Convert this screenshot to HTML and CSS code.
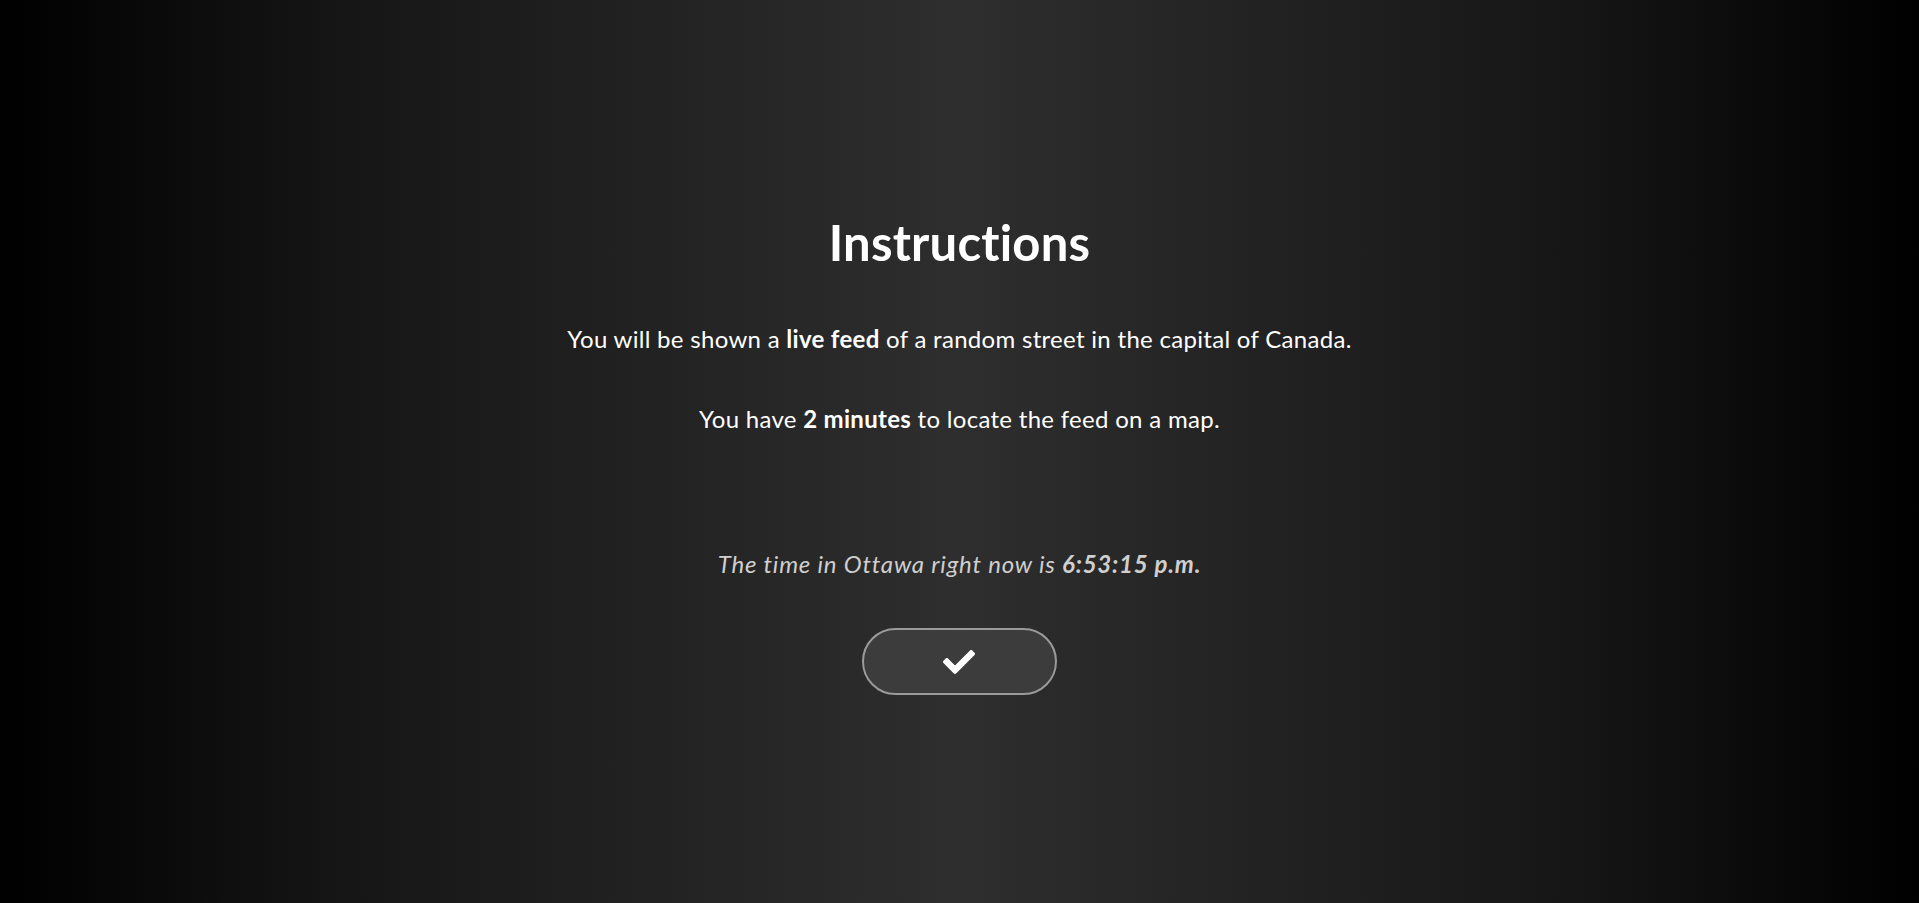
FILE: index.html
```html
<!DOCTYPE html>
<html lang="en">
<head>
<meta charset="utf-8">
<title>Instructions</title>
<link rel="stylesheet" href="styles.css">
</head>
<body>
<main class="page">
  <section class="instructions">
    <h1 class="title">Instructions</h1>
    <p class="line">You will be shown a <strong>live feed</strong> of a random street in the capital of Canada.</p>
    <p class="line">You have <strong>2 minutes</strong> to locate the feed on a map.</p>
    <p class="time">The time in Ottawa right now is <strong>6:53:15 p.m.</strong></p>
    <button class="go" type="button" aria-label="Start">
      <svg class="check" viewBox="0 0 512 512" width="32" height="32" aria-hidden="true"><path fill="#fff" d="M173.898 439.404l-166.4-166.4c-9.997-9.997-9.997-26.206 0-36.204l36.203-36.204c9.997-9.998 26.207-9.998 36.204 0L192 312.69 432.095 72.596c9.997-9.997 26.207-9.997 36.204 0l36.203 36.204c9.997 9.997 9.997 26.206 0 36.204l-294.4 294.401c-9.998 9.997-26.207 9.997-36.204-.001z"/></svg>
    </button>
  </section>
</main>
</body>
</html>
```
FILE: styles.css
```css
html, body {
  margin: 0;
  padding: 0;
  height: 100%;
}
body {
  background: linear-gradient(to right, #000 0%, #161616 18%, #2e2e2e 50%, #161616 82%, #000 100%);
  color: #fff;
  font-family: "Lato", "Open Sans", sans-serif;
}
.page {
  height: 100%;
  display: flex;
  justify-content: center;
}
.instructions {
  display: flex;
  flex-direction: column;
  align-items: center;
  padding-top: 213px;
}
.title {
  margin: 0;
  font-size: 49px;
  font-weight: 700;
  line-height: 58px;
  letter-spacing: 0.2px;
}
.line {
  margin: 0;
  font-size: 24px;
  line-height: 30px;
  letter-spacing: 0.3px;
}
.title + .line { margin-top: 53px; }
.line + .line { margin-top: 50px; }
.time {
  margin: 115px 0 0;
  font-size: 24px;
  line-height: 30px;
  font-style: italic;
  letter-spacing: 0.8px;
  color: #cfcfcf;
}
.go {
  margin-top: 49px;
  width: 195px;
  height: 67px;
  border: 2px solid #9a9a9a;
  border-radius: 34px;
  background: #3c3c3c;
  display: flex;
  align-items: center;
  justify-content: center;
  padding: 0;
  cursor: pointer;
}
.check { width: 32px; height: 32px; }
```
